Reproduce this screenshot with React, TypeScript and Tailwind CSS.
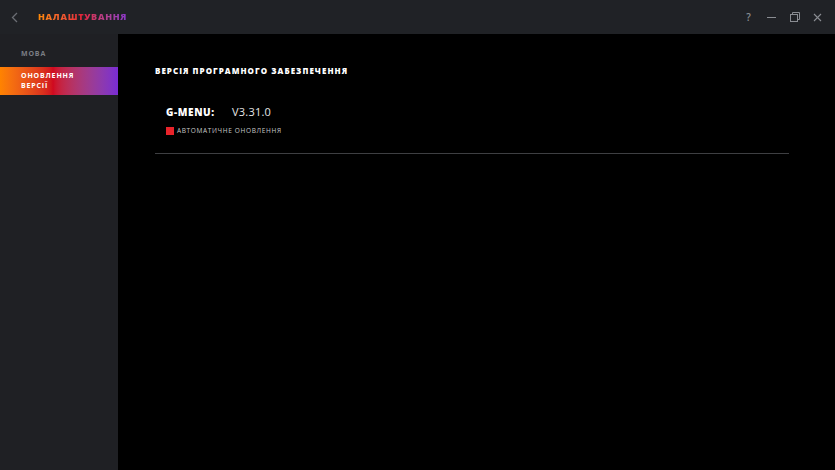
import React from 'react';

const font = { fontFamily: '"Open Sans", "Noto Sans", "DejaVu Sans", sans-serif' };

export default function App() {
  return (
    <div className="w-[835px] h-[470px] flex flex-col bg-black overflow-hidden" style={font}>
      {/* title bar */}
      <div className="h-[34px] shrink-0 bg-[#202226] flex items-center">
        <button className="w-[30px] h-full flex items-center justify-center text-[#6b6e74]">
          <svg width="8" height="11" viewBox="0 0 8 11" fill="none" stroke="currentColor" strokeWidth="1.3">
            <path d="M6 1 L1.5 5.5 L6 10" />
          </svg>
        </button>
        <div
          className="ml-[8px] text-[9px] font-extrabold tracking-[0.08em] bg-gradient-to-r from-[#ff8a00] via-[#e3203a] to-[#8a35c9] bg-clip-text text-transparent"
        >
          НАЛАШТУВАННЯ
        </div>
        <div className="ml-auto flex items-center h-full text-[#8a8d92]">
          <div className="w-[23px] text-center text-[10px] font-semibold">?</div>
          <div className="w-[23px] flex justify-center">
            <div className="w-[9px] h-[1px] bg-[#8a8d92]" />
          </div>
          <div className="w-[23px] flex justify-center">
            <svg width="10" height="10" viewBox="0 0 10 10" fill="none" stroke="currentColor" strokeWidth="1">
              <rect x="0.5" y="2.5" width="7" height="7" />
              <path d="M2.5 2.5 V0.5 H9.5 V7.5 H7.5" />
            </svg>
          </div>
          <div className="w-[23px] mr-[6px] flex justify-center">
            <svg width="9" height="9" viewBox="0 0 9 9" stroke="currentColor" strokeWidth="1.1">
              <path d="M1 1 L8 8 M8 1 L1 8" />
            </svg>
          </div>
        </div>
      </div>

      <div className="flex flex-1">
        {/* sidebar */}
        <div className="w-[118px] shrink-0 bg-[#1f2024] pt-[15px]">
          <div className="h-[18px] pl-[21px] text-[7px] font-bold tracking-[0.12em] text-[#7b7e84]">МОВА</div>
          <div className="h-[28px] pl-[21px] flex flex-col justify-center bg-gradient-to-r from-[#ff8300] via-[#d0081f] via-45% to-[#7a2bd4] text-white text-[7px] font-bold tracking-[0.12em] leading-[10px]">
            <span>ОНОВЛЕННЯ</span>
            <span>ВЕРСІЇ</span>
          </div>
        </div>

        {/* content */}
        <div className="flex-1 pl-[37px] pr-[46px] pt-[31px]">
          <div className="text-[8px] font-extrabold tracking-[0.13em] text-white leading-[12px]">
            ВЕРСІЯ ПРОГРАМНОГО ЗАБЕЗПЕЧЕННЯ
          </div>
          <div className="pl-[11px] mt-[28px]">
            <div className="flex items-center h-[14px]">
              <span className="w-[66px] text-[10px] font-extrabold tracking-[0.06em] text-white">G-MENU:</span>
              <span className="text-[11px] text-[#e6e6e6] tracking-[0.02em]">V3.31.0</span>
            </div>
            <div className="flex items-center mt-[7px]">
              <div className="w-[8px] h-[8px] bg-[#e8232a]" />
              <span className="ml-[3px] text-[6.5px] tracking-[0.1em] text-[#c8c8c8]">АВТОМАТИЧНЕ ОНОВЛЕННЯ</span>
            </div>
          </div>
          <div className="mt-[17px] h-px bg-[#3e3f42]" />
        </div>
      </div>
    </div>
  );
}
